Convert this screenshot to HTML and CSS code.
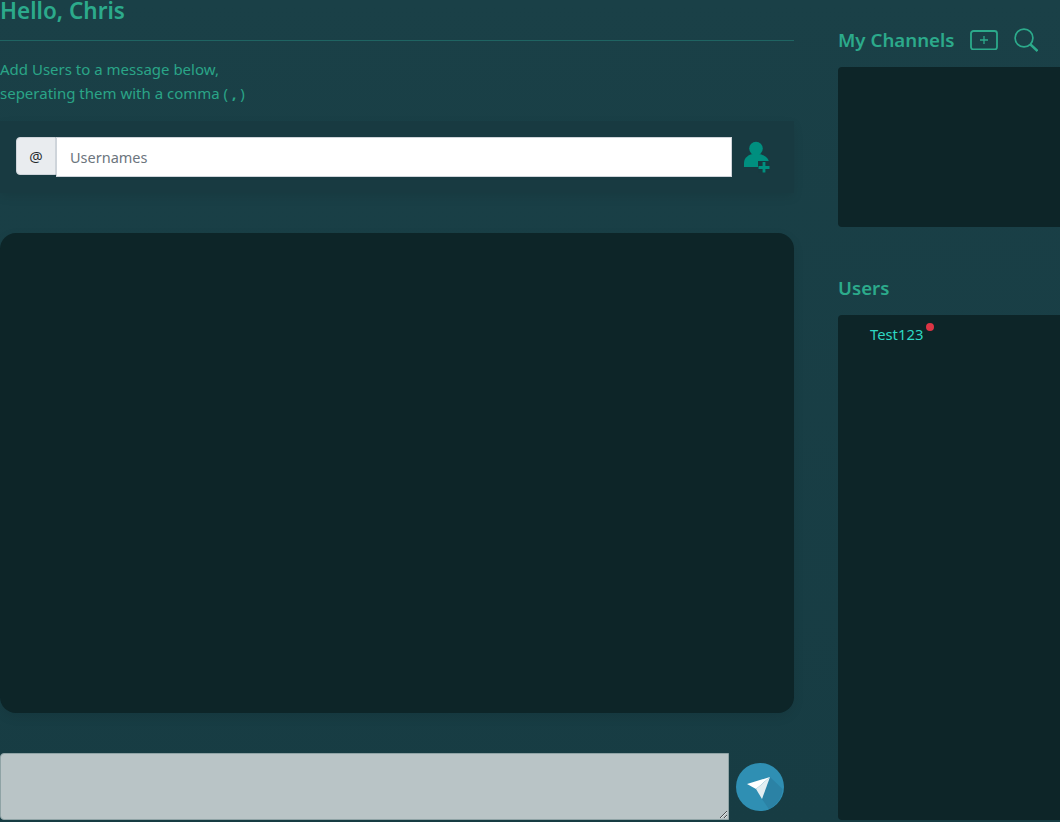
FILE: index.html
```html
<!DOCTYPE html>
<html lang="en">
<head>
<meta charset="utf-8">
<title>Chat</title>
<link rel="stylesheet" href="styles.css">
</head>
<body>
<div class="layout">
  <main class="main">
    <h1 class="greeting">Hello, Chris</h1>
    <hr class="rule">
    <p class="hint">Add Users to a message below,<br>seperating them with a comma ( <b class="comma">,</b> )</p>
    <section class="add-card">
      <span class="at">@</span>
      <input class="names" type="text" placeholder="Usernames">
      <button class="add-btn" aria-label="Add user">
        <svg width="28" height="32" viewBox="0 0 28 32">
          <circle cx="13" cy="7.500" r="6.800" fill="#008f7f"/>
          <path d="M1 26v-4C1 16.500 6 13.500 10 13h6c4 .5 10 3.500 10 9v4z" fill="#008f7f"/>
          <path d="M15 20h12v12H15z" fill="#17393f"/>
          <path d="M21 21v10.500M15.500 26.500H26.500" stroke="#008f7f" stroke-width="2.800" fill="none"/>
        </svg>
      </button>
    </section>
    <section class="messages"></section>
    <section class="composer">
      <textarea class="msg"></textarea>
      <button class="send" aria-label="Send">
        <svg width="48" height="48" viewBox="0 0 48 48">
          <circle cx="24" cy="24" r="24" fill="#2f8fb3"/>
          <path d="M34 14 46.500 26A24 24 0 0 1 33 46.200L26 36z" fill="#2b82a5"/>
          <path d="M34 14 11 21 20 26z" fill="#fff"/>
          <path d="M34 14 20 26 26 36z" fill="#e3edf1"/>
        </svg>
      </button>
    </section>
  </main>
  <aside class="side">
    <div class="side-head">
      <h2 class="side-title">My Channels</h2>
      <svg class="ic-new" width="28" height="20" viewBox="0 0 28 20" fill="none" stroke="#2caa8b">
        <rect x="1" y="1" width="26" height="18.500" rx="2.500" stroke-width="1.800"/>
        <path d="M14 6v8M10 10h8" stroke-width="1.300"/>
      </svg>
      <svg class="ic-search" width="24" height="24" viewBox="0 0 24 24" fill="none" stroke="#2caa8b">
        <circle cx="10" cy="10" r="8.900" stroke-width="1.700"/>
        <path d="M16.500 16.500 23.500 23" stroke-width="2.400"/>
      </svg>
    </div>
    <div class="panel channels"></div>
    <h2 class="side-title users-title">Users</h2>
    <div class="panel users">
      <span class="user">Test123<i class="dot"></i></span>
    </div>
  </aside>
</div>
</body>
</html>
```
FILE: styles.css
```css
* { box-sizing: border-box; }
html, body { margin: 0; height: 100%; overflow: hidden; }
body {
  background: linear-gradient(180deg, #1a4047 0%, #173c43 100%);
  font-family: "Noto Sans", "Open Sans", sans-serif;
  color: #2aa587;
}
.layout {
  display: grid;
  grid-template-columns: 794px 300px;
  column-gap: 44px;
  width: 1138px;
  height: 822px;
}
.main { min-width: 0; }
.greeting {
  margin: 0;
  height: 40px;
  font-size: 22.500px;
  line-height: 22px;
  font-weight: 600;
  color: #2caa8b;
}
.rule { margin: 0; border: 0; border-top: 1px solid #1f6462; }
.hint {
  margin: 16px 0 0;
  font-size: 15px;
  line-height: 24px;
  height: 64px;
}
.comma { font-weight: 700; }
.add-card {
  display: flex;
  align-items: center;
  height: 72px;
  padding: 0 16px;
  background: #183a41;
  box-shadow: 0 4px 10px rgba(0, 0, 0, .08);
}
.at {
  display: flex;
  align-items: center;
  justify-content: center;
  width: 40px;
  height: 38px;
  margin-top: -2px;
  background: #e9ecef;
  border: 1px solid #ced4da;
  border-radius: 4px 0 0 4px;
  color: #212529;
  font: 15px "Open Sans", sans-serif;
}
.names {
  width: 676px;
  height: 40px;
  padding: 0 13px;
  border: 1px solid #ced4da;
  background: #fff;
  font: 14.500px "Noto Sans", sans-serif;
  color: #495057;
  outline: 0;
}
.names::placeholder { color: #6c757d; opacity: 1; }
.add-btn {
  display: flex;
  margin-left: 11px;
  padding: 0;
  border: 0;
  background: none;
}
.messages {
  height: 480px;
  margin-top: 40px;
  background: #0d2528;
  border-radius: 16px;
  box-shadow: 0 4px 12px rgba(0, 0, 0, .08);
}
.composer {
  display: flex;
  align-items: center;
  gap: 7px;
  margin-top: 40px;
  height: 67px;
}
.msg {
  display: block;
  width: 729px;
  height: 67px;
  border: 1px solid #8fa3a5;
  border-radius: 4px 0 0 4px;
  background: #b9c4c6;
  outline: 0;
}
.send {
  display: flex;
  padding: 0;
  border: 0;
  background: none;
}
.side { min-width: 0; }
.side-head {
  display: flex;
  align-items: center;
  height: 67px;
  padding-top: 13px;
}
.side-title {
  margin: 0;
  font-size: 18.700px;
  line-height: 28px;
  font-weight: 600;
  color: #2caa8b;
}
.ic-new { margin-left: 15px; }
.ic-search { margin-left: 16px; margin-top: -1px; }
.panel {
  background: #0d2528;
  border-radius: 4px;
}
.channels { height: 160px; }
.users-title { margin-top: 47px; height: 41px; }
.users { height: 505px; padding: 8px 32px; }
.user {
  position: relative;
  font-size: 14.800px;
  line-height: 20px;
  color: #2ed8c3;
}
.dot {
  position: absolute;
  top: -1px;
  right: -11px;
  width: 8px;
  height: 8px;
  border-radius: 50%;
  background: #dc3545;
}
```
